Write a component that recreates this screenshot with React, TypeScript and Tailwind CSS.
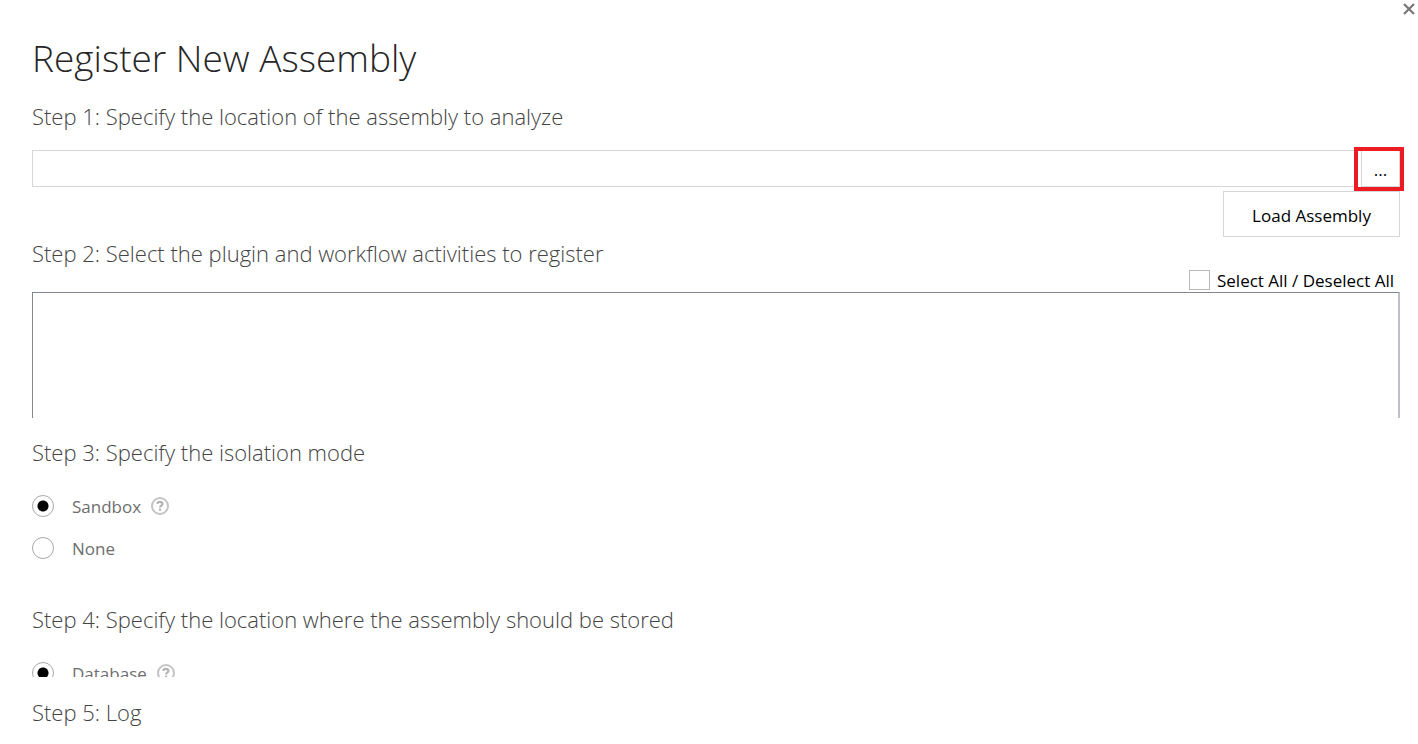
import { useState, type ReactNode } from "react";

function StepTitle({ children }: { children: ReactNode }) {
  return (
    <h2 className="text-[22px] leading-8 font-light text-[#444444]">{children}</h2>
  );
}

function HelpIcon() {
  return (
    <svg viewBox="0 0 18 18" className="size-[18px] shrink-0" fill="none" aria-hidden="true">
      <circle cx="9" cy="9" r="8" stroke="#c4c4c4" strokeWidth="2" />
      <path
        d="M6.4 6.8C6.5 5.4 7.5 4.9 8.9 4.9c1.5 0 2.5.7 2.5 2 0 1.8-2.3 1.7-2.3 3.6"
        stroke="#b4b4b4"
        strokeWidth="2.2"
      />
      <rect x="8" y="11.6" width="2.2" height="2.2" fill="#b4b4b4" />
    </svg>
  );
}

type RadioProps = {
  name: string;
  label: string;
  help?: boolean;
  checked: boolean;
  onSelect: () => void;
};

function RadioRow({ name, label, help, checked, onSelect }: RadioProps) {
  return (
    <div className="flex h-6 items-center">
      <label className="flex items-center gap-[18px]">
        <input
          type="radio"
          name={name}
          checked={checked}
          onChange={onSelect}
          className="size-[22px] shrink-0 appearance-none rounded-full border border-[#a8a8a8] bg-white checked:bg-[radial-gradient(circle,#000_5px,transparent_6px)]"
        />
        <span className="pt-0.5 text-[17px] leading-6 text-[#6e6e6e]">{label}</span>
      </label>
      {help && (
        <button type="button" aria-label={`Help for ${label}`} className="ml-2.5">
          <HelpIcon />
        </button>
      )}
    </div>
  );
}

export default function App() {
  const [path, setPath] = useState("");
  const [all, setAll] = useState(false);
  const [mode, setMode] = useState("Sandbox");
  const [storage, setStorage] = useState("Database");

  return (
    <main className="relative min-h-screen bg-white pt-[34px] pr-[18px] pl-8 font-['Open_Sans',sans-serif]">
      <button type="button" aria-label="Close" className="absolute top-[3px] right-[3px]">
        <svg viewBox="0 0 12 12" className="size-3" fill="none" aria-hidden="true">
          <path d="M1 1l10 10M11 1L1 11" stroke="#777777" strokeWidth="2.2" />
        </svg>
      </button>

      <h1 className="text-[37px] leading-[48px] font-light text-[#262626]">
        Register New Assembly
      </h1>

      <section className="mt-[18px]">
        <StepTitle>Step 1: Specify the location of the assembly to analyze</StepTitle>
        <div className="mt-[18px] flex">
          <input
            type="text"
            aria-label="Assembly location"
            value={path}
            onChange={(e) => setPath(e.target.value)}
            className="h-[37px] min-w-0 flex-1 border border-[#d6d6d6] px-2 outline-none"
          />
          <div className="relative ml-[5px] flex">
            <button
              type="button"
              aria-label="Browse"
              className="h-[37px] w-[39px] border border-[#d6d6d6] pt-0.5 text-[17px] leading-6 text-black"
            >
              ...
            </button>
            <div className="pointer-events-none absolute -top-[3px] -right-1 -bottom-1 -left-[7px] border-4 border-[#ed1c24]" />
          </div>
        </div>
        <div className="mt-1 flex justify-end">
          <button
            type="button"
            className="h-[46px] w-[177px] border border-[#d6d6d6] pt-1 text-[17px] leading-6 text-black"
          >
            Load Assembly
          </button>
        </div>
      </section>

      <section>
        <StepTitle>Step 2: Select the plugin and workflow activities to register</StepTitle>
        <div className="flex h-[23px] items-start justify-end">
          <label className="flex items-start gap-[7px]">
            <input
              type="checkbox"
              checked={all}
              onChange={(e) => setAll(e.target.checked)}
              className="mt-px h-5 w-[21px] appearance-none border border-[#b8b8b8] bg-white checked:bg-[#555555]"
            />
            <span className="w-[183px] text-[17px] leading-6 whitespace-nowrap text-black">
              Select All / Deselect All
            </span>
          </label>
        </div>
        <div className="h-[126px] border-t border-r-2 border-l border-t-[#828790] border-r-[#c0c0c8] border-l-[#828790]" />
      </section>

      <section className="mt-[18px]">
        <StepTitle>Step 3: Specify the isolation mode</StepTitle>
        <div className="mt-[26px] flex flex-col gap-[18px]">
          <RadioRow
            name="isolation"
            label="Sandbox"
            help
            checked={mode === "Sandbox"}
            onSelect={() => setMode("Sandbox")}
          />
          <RadioRow
            name="isolation"
            label="None"
            checked={mode === "None"}
            onSelect={() => setMode("None")}
          />
        </div>
      </section>

      <section className="mt-[43px]">
        <StepTitle>Step 4: Specify the location where the assembly should be stored</StepTitle>
        <div className="mt-[26px] h-4 overflow-hidden">
          <RadioRow
            name="storage"
            label="Database"
            help
            checked={storage === "Database"}
            onSelect={() => setStorage("Database")}
          />
        </div>
      </section>

      <section className="mt-[19px]">
        <StepTitle>Step 5: Log</StepTitle>
      </section>
    </main>
  );
}
